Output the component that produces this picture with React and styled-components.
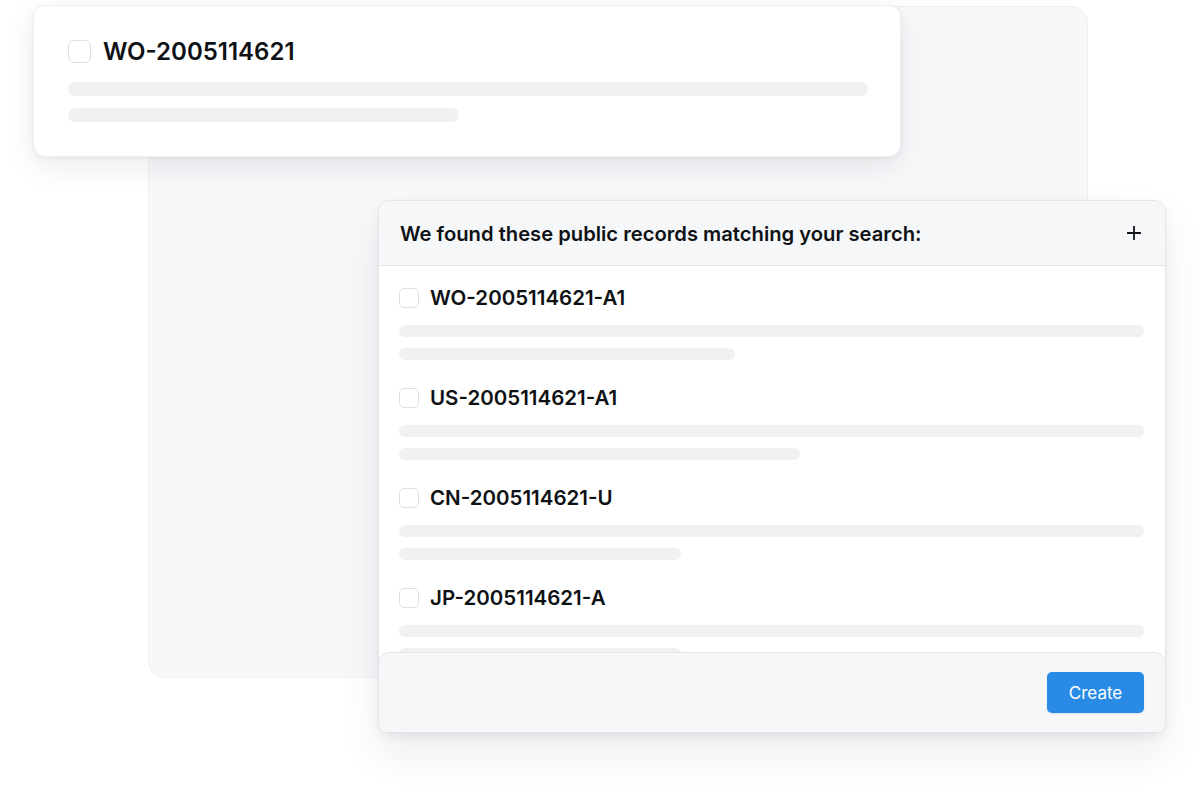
import React from "react";
import styled, { createGlobalStyle } from "styled-components";

const Global = createGlobalStyle`
  html, body { margin: 0; padding: 0; background: #ffffff; }
  body { font-family: Inter, "Noto Sans", sans-serif; color: #111418; }
  * { box-sizing: border-box; }
`;

const Stage = styled.div`
  position: relative;
  width: 1200px;
  height: 802px;
  overflow: hidden;
  background: #ffffff;
`;

const Backdrop = styled.div`
  position: absolute;
  left: 148px;
  top: 6px;
  width: 940px;
  height: 672px;
  border-radius: 16px;
  background: #f7f8fa;
  border: 1px solid #eef0f3;
`;

const TopCard = styled.div`
  position: absolute;
  left: 33px;
  top: 5px;
  width: 868px;
  height: 152px;
  background: #ffffff;
  border-radius: 12px;
  border: 1px solid #eceef1;
  box-shadow: 0 10px 30px rgba(17, 24, 39, 0.08), 0 2px 6px rgba(17, 24, 39, 0.05);
  padding: 34px 32px 0 34px;
  display: flex;
  flex-direction: column;
`;

const Row = styled.div`
  display: flex;
  align-items: center;
  gap: ${(p) => (p.$large ? "12px" : "11px")};
  height: ${(p) => (p.$large ? "23px" : "20px")};
`;

const Check = styled.span`
  flex: none;
  width: ${(p) => (p.$large ? "23px" : "20px")};
  height: ${(p) => (p.$large ? "23px" : "20px")};
  border-radius: ${(p) => (p.$large ? "6px" : "5px")};
  border: 1px solid #dcdfe4;
  background: #ffffff;
`;

const Code = styled.span`
  font-size: ${(p) => (p.$large ? "24px" : "20.5px")};
  font-weight: 600;
  color: #0f1215;
  line-height: 1;
`;

const Bars = styled.div`
  display: flex;
  flex-direction: column;
  gap: ${(p) => (p.$large ? "12px" : "11px")};
  margin-top: ${(p) => (p.$large ? "19px" : "17px")};
`;

const Bar = styled.div`
  height: ${(p) => (p.$large ? "14px" : "12px")};
  border-radius: 999px;
  background: #f0f1f3;
`;

const Dialog = styled.div`
  position: absolute;
  left: 378px;
  top: 200px;
  width: 788px;
  height: 534px;
  background: #ffffff;
  border-radius: 12px;
  border: 1px solid #e3e5e9;
  box-shadow: 0 20px 40px rgba(17, 24, 39, 0.08), 0 4px 10px rgba(17, 24, 39, 0.05);
  overflow: hidden;
  display: flex;
  flex-direction: column;
`;

const Header = styled.div`
  flex: none;
  height: 65px;
  background: #f6f7f9;
  border-bottom: 1px solid #e3e5e9;
  display: flex;
  align-items: center;
  justify-content: space-between;
  padding: 0 24px 0 21px;
`;

const Title = styled.h2`
  margin: 0;
  font-size: 20.2px;
  font-weight: 600;
  color: #0f1215;
  letter-spacing: 0;
`;

const PlusButton = styled.span`
  display: flex;
  color: #111418;
`;

const Body = styled.div`
  position: relative;
  flex: 1;
  padding: 22px 21px 0 20px;
  display: flex;
  flex-direction: column;
  gap: 28px;
`;

const Item = styled.div`
  display: flex;
  flex-direction: column;
`;

const Footer = styled.div`
  position: absolute;
  left: -1px;
  right: -1px;
  bottom: 0;
  height: 81px;
  background: #f6f7f9;
  border: 1px solid #e3e5e9;
  border-radius: 12px 12px 0 0;
  display: flex;
  align-items: center;
  justify-content: flex-end;
  padding: 0 21px 0 0;
`;

const CreateButton = styled.button`
  width: 97px;
  height: 41px;
  border: none;
  border-radius: 5px;
  background: #2a8be6;
  color: #ffffff;
  font-family: Inter, "Noto Sans", sans-serif;
  font-size: 17px;
  font-weight: 400;
  box-shadow: 0 1px 2px rgba(17, 24, 39, 0.1);
  cursor: pointer;
`;

const records = [
  { code: "WO-2005114621-A1", w: 336 },
  { code: "US-2005114621-A1", w: 401 },
  { code: "CN-2005114621-U", w: 282 },
  { code: "JP-2005114621-A", w: 282 },
];

function Plus() {
  return (
    <svg width="14" height="14" viewBox="0 0 14 14" fill="none">
      <path d="M7 0.5v13M0.5 7h13" stroke="currentColor" strokeWidth="1.8" strokeLinecap="round" />
    </svg>
  );
}

export default function App() {
  return (
    <Stage>
      <Global />
      <Backdrop />
      <TopCard>
        <Row $large>
          <Check $large />
          <Code $large>WO-2005114621</Code>
        </Row>
        <Bars $large>
          <Bar $large />
          <Bar $large style={{ width: 391 }} />
        </Bars>
      </TopCard>
      <Dialog>
        <Header>
          <Title>We found these public records matching your search:</Title>
          <PlusButton>
            <Plus />
          </PlusButton>
        </Header>
        <Body>
          {records.map((r) => (
            <Item key={r.code}>
              <Row>
                <Check />
                <Code>{r.code}</Code>
              </Row>
              <Bars>
                <Bar />
                <Bar style={{ width: r.w }} />
              </Bars>
            </Item>
          ))}
          <Footer>
            <CreateButton>Create</CreateButton>
          </Footer>
        </Body>
      </Dialog>
    </Stage>
  );
}
